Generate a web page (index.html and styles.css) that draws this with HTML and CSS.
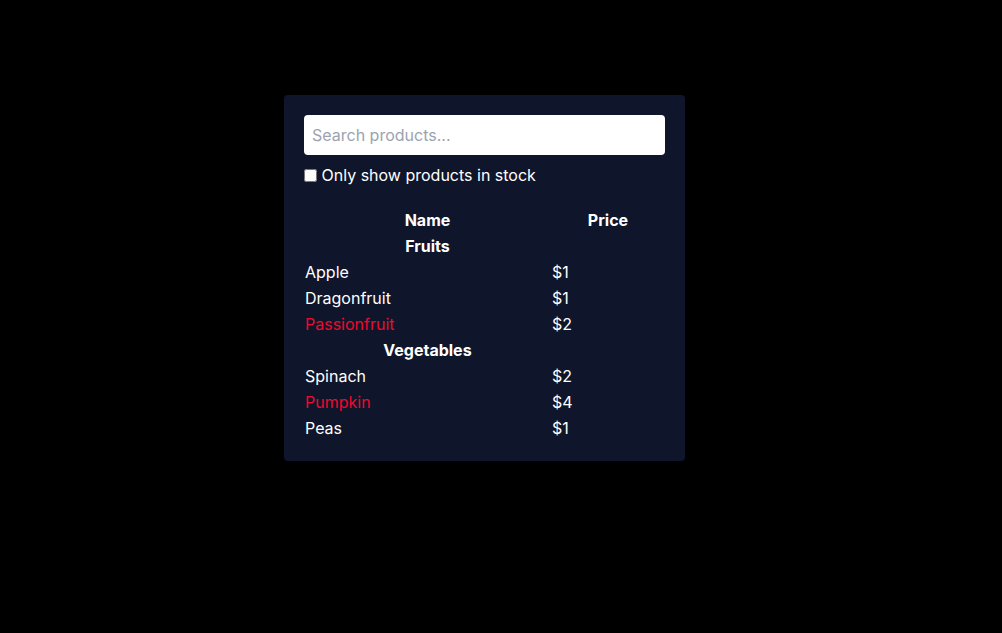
FILE: index.html
```html
<!DOCTYPE html>
<html>
<head>
<meta charset="utf-8">
<link rel="stylesheet" href="styles.css">
</head>
<body>
<div class="page">
  <div class="panel">
    <form class="search">
      <input class="search-input" type="text" placeholder="Search products...">
      <label class="stock"><input class="stock-box" type="checkbox"> Only show products in stock</label>
    </form>
    <table class="products">
      <thead>
        <tr><th>Name</th><th>Price</th></tr>
      </thead>
      <tbody>
        <tr><th>Fruits</th></tr>
        <tr><td>Apple</td><td>$1</td></tr>
        <tr><td>Dragonfruit</td><td>$1</td></tr>
        <tr><td class="out">Passionfruit</td><td>$2</td></tr>
        <tr><th>Vegetables</th></tr>
        <tr><td>Spinach</td><td>$2</td></tr>
        <tr><td class="out">Pumpkin</td><td>$4</td></tr>
        <tr><td>Peas</td><td>$1</td></tr>
      </tbody>
    </table>
  </div>
</div>
</body>
</html>
```
FILE: styles.css
```css
* { box-sizing: border-box; }
html, body { margin: 0; padding: 0; background: #000; }
body {
  font-family: Inter, "Noto Sans", sans-serif;
  font-size: 16px;
  line-height: 1.5;
  color: #fff;
}
.page {
  padding: 95px 0 0 284px;
}
.panel {
  width: 401px;
  background: #0f152b;
  border-radius: 4px;
  padding: 20px;
}
.search {
  margin: 0;
  display: flex;
  flex-direction: column;
  gap: 8px;
}
.search-input {
  margin: 0;
  width: 100%;
  height: 40px;
  border: none;
  border-radius: 4px;
  background: #fff;
  padding: 0 8px;
  font-family: inherit;
  font-size: 16px;
  color: #111827;
  outline: none;
}
.search-input::placeholder { color: #9ca3af; }
.stock {
  display: block;
  height: 24px;
  color: #fff;
}
.stock-box {
  margin: 0;
  width: 13px;
  height: 13px;
  vertical-align: -1px;
}
.products {
  margin-top: 20px;
  width: 100%;
  border-collapse: collapse;
}
.products th, .products td {
  padding: 1px;
  line-height: 24px;
}
.products th { font-weight: 700; text-align: center; }
.products td { text-align: left; }
.products .out { color: #ee0a2c; }
```
